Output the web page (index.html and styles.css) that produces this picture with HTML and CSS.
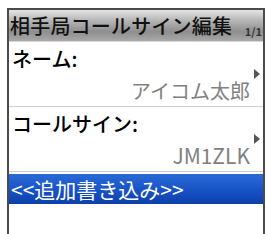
FILE: index.html
```html
<!DOCTYPE html>
<html>
  <head>
    <meta name="viewport" content="width=device-width, initial-scale=1" />
    <title>相手局コールサイン編集</title>
    <link rel="stylesheet" href="styles.css">
  </head>
  <body>
    <div class="screen">
      <div class="title">
        <span class="title-text">相手局コールサイン編集</span>
        <span class="page">1/1</span>
      </div>
      <div class="item">
        <div class="label">ネーム:</div>
        <div class="value">
          <span>アイコム太郎</span>
          <span class="arrow"></span>
        </div>
      </div>
      <div class="item">
        <div class="label">コールサイン:</div>
        <div class="value latin">
          <span>JM1ZLK</span>
          <span class="arrow"></span>
        </div>
      </div>
      <div class="add">&lt;&lt;追加書き込み&gt;&gt;</div>
    </div>
  </body>
</html>
```

FILE: styles.css
```css
body {
  margin: 0;
  background: #fff;
  font-family: "Noto Sans CJK JP", "Noto Sans", sans-serif;
}

.screen {
  margin: 8px 0 0 7px;
  width: 254px;
  height: 230px;
  border: 2px solid #4a4a4a;
  border-bottom: none;
  background: #fff;
}

/* Title bar */
.title {
  height: 31px;
  display: flex;
  align-items: center;
  padding-left: 1px;
  background: linear-gradient(#e4e4e4 0%, #b4b4b4 35%, #8e8e8e 70%, #a8a8a8 100%);
  border-bottom: 1px solid #d8d8d8;
}
.title-text {
  font-size: 20px;
  font-weight: 500;
  line-height: 1;
  color: #111;
  letter-spacing: 0.2px;
}
.page {
  margin-left: auto;
  margin-right: 1px;
  align-self: flex-end;
  margin-bottom: 4px;
  font-size: 11px;
  font-weight: bold;
  line-height: 1;
  color: #333;
}

/* Items */
.item {
  border-bottom: 1px solid #d0d0d0;
}
.label {
  height: 32px;
  display: flex;
  align-items: center;
  padding-left: 3px;
  font-size: 20px;
  font-weight: 500;
  color: #000;
}
.value {
  height: 32px;
  display: flex;
  align-items: center;
  justify-content: flex-end;
  padding-right: 3px;
  font-size: 20px;
  color: #808080;
}
.latin {
  font-size: 21px;
}
.arrow {
  align-self: flex-start;
  margin-top: -5px;
  margin-left: 4px;
  width: 0;
  height: 0;
  border-top: 5px solid transparent;
  border-bottom: 5px solid transparent;
  border-left: 6px solid #555;
}

/* Selected row */
.add {
  margin-top: 2px;
  height: 30px;
  display: flex;
  align-items: center;
  padding-left: 2px;
  background: linear-gradient(#2a6ad8, #1650c4 60%, #0d3fa8);
  color: #fff;
  font-size: 21px;
}
```
